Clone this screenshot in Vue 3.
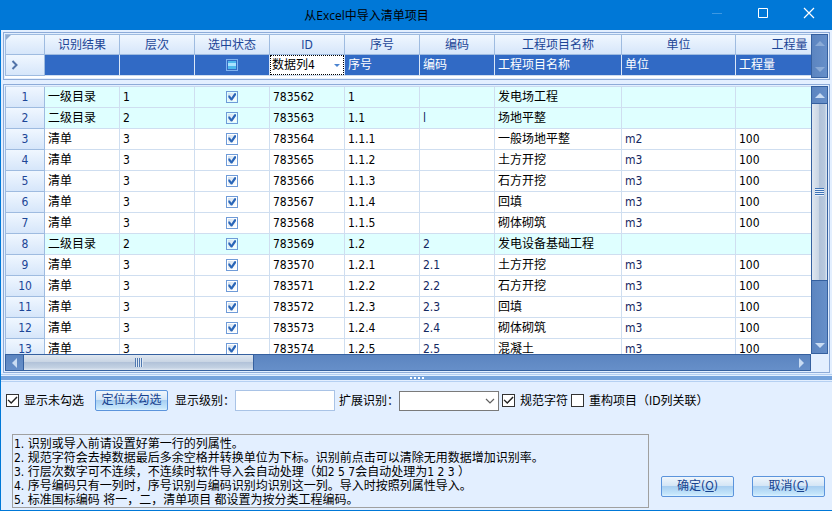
<script setup>
import { ref, reactive } from 'vue'

const headers = ['识别结果', '层次', '选中状态', 'ID', '序号', '编码', '工程项目名称', '单位', '工程量']

const raw = [
  ['一级目录', '1', '783562', '1', '', '发电场工程', '', ''],
  ['二级目录', '2', '783563', '1.1', 'l', '场地平整', '', ''],
  ['清单', '3', '783564', '1.1.1', '', '一般场地平整', 'm2', '100'],
  ['清单', '3', '783565', '1.1.2', '', '土方开挖', 'm3', '100'],
  ['清单', '3', '783566', '1.1.3', '', '石方开挖', 'm3', '100'],
  ['清单', '3', '783567', '1.1.4', '', '回填', 'm3', '100'],
  ['清单', '3', '783568', '1.1.5', '', '砌体砌筑', 'm3', '100'],
  ['二级目录', '2', '783569', '1.2', '2', '发电设备基础工程', '', ''],
  ['清单', '3', '783570', '1.2.1', '2.1', '土方开挖', 'm3', '100'],
  ['清单', '3', '783571', '1.2.2', '2.2', '石方开挖', 'm3', '100'],
  ['清单', '3', '783572', '1.2.3', '2.3', '回填', 'm3', '100'],
  ['清单', '3', '783573', '1.2.4', '2.4', '砌体砌筑', 'm3', '100'],
  ['清单', '3', '783574', '1.2.5', '2.5', '混凝土', 'm3', '100']
]
const rows = reactive(
  raw.map(([kind, level, id, seq, code, name, unit, qty]) => ({
    kind, level, id, seq, code, name, unit, qty, checked: true
  }))
)

const idColumn = ref('数据列4')
const showUnchecked = ref(true)
const levels = ref('')
const extended = ref('')
const normalize = ref(true)
const rebuild = ref(false)

const notes = [
  '1. 识别或导入前请设置好第一行的列属性。',
  '2. 规范字符会去掉数据最后多余空格并转换单位为下标。识别前点击可以清除无用数据增加识别率。',
  '3. 行层次数字可不连续，不连续时软件导入会自动处理（如2 5 7会自动处理为1 2 3 ）',
  '4. 序号编码只有一列时，序号识别与编码识别均识别这一列。导入时按照列属性导入。',
  '5. 标准国标编码 将一，二，清单项目 都设置为按分类工程编码。'
]
</script>

<template>
  <div class="window">
    <header class="titlebar">
      <h1 class="title">从Excel中导入清单项目</h1>
      <button class="win-btn" type="button" aria-label="最小化" disabled>
        <svg width="12" height="12" viewBox="0 0 12 12"><path d="M1 6.5H11" stroke="#3d98e2" fill="none" /></svg>
      </button>
      <button class="win-btn" type="button" aria-label="最大化">
        <svg width="12" height="12" viewBox="0 0 12 12"><path d="M1.5 1.5H10.5V10.5H1.5Z" stroke="#fff" fill="none" /></svg>
      </button>
      <button class="win-btn" type="button" aria-label="关闭">
        <svg width="12" height="12" viewBox="0 0 12 12"><path d="M1 1L11 11M11 1L1 11" stroke="#fff" stroke-width="1.2" fill="none" /></svg>
      </button>
    </header>

    <main class="content">
      <section class="panel head-panel">
        <div class="viewport">
          <table class="grid">
            <colgroup>
              <col class="c-ind" /><col v-for="n in 6" :key="n" class="c-std" />
              <col class="c-name" /><col class="c-unit" /><col class="c-qty" />
            </colgroup>
            <thead>
              <tr>
                <th class="ind corner"></th>
                <th v-for="h in headers" :key="h" class="head">{{ h }}</th>
              </tr>
            </thead>
            <tbody>
              <tr class="mapping">
                <th class="ind arrow-cell">
                  <svg width="8" height="10" viewBox="0 0 8 10"><path d="M1.5 1L5.5 5L1.5 9" stroke="#5273a8" stroke-width="2" fill="none" /></svg>
                </th>
                <td></td>
                <td></td>
                <td class="center"><input class="tick partial" type="checkbox" aria-label="全选" /></td>
                <td class="editing">
                  <select v-model="idColumn" class="cell-select" aria-label="ID 列属性">
                    <option>数据列4</option>
                  </select>
                </td>
                <td>序号</td>
                <td>编码</td>
                <td>工程项目名称</td>
                <td>单位</td>
                <td>工程量</td>
              </tr>
            </tbody>
          </table>
        </div>
        <div class="vbar off">
          <button class="bar-btn" type="button" aria-label="向上" disabled><i class="tri up"></i></button>
          <button class="bar-btn" type="button" aria-label="向下" disabled><i class="tri down"></i></button>
        </div>
      </section>

      <section class="panel body-panel">
        <div class="viewport">
          <table class="grid rows">
            <colgroup>
              <col class="c-ind" /><col v-for="n in 6" :key="n" class="c-std" />
              <col class="c-name" /><col class="c-unit" /><col class="c-qty" />
            </colgroup>
            <tbody>
              <tr v-for="(r, i) in rows" :key="r.id" :class="{ group: r.level !== '3' }">
                <th class="ind">{{ i + 1 }}</th>
                <td>{{ r.kind }}</td>
                <td>{{ r.level }}</td>
                <td class="center"><input v-model="r.checked" class="tick" type="checkbox" :aria-label="'选中 ' + r.id" /></td>
                <td>{{ r.id }}</td>
                <td>{{ r.seq }}</td>
                <td class="code">{{ r.code }}</td>
                <td>{{ r.name }}</td>
                <td class="code">{{ r.unit }}</td>
                <td>{{ r.qty }}</td>
              </tr>
            </tbody>
          </table>
        </div>
        <div class="vbar">
          <button class="bar-btn" type="button" aria-label="向上"><i class="tri up"></i></button>
          <div class="track">
            <div class="thumb"><i class="grip"></i></div>
          </div>
          <button class="bar-btn" type="button" aria-label="向下"><i class="tri down"></i></button>
        </div>
        <div class="hbar">
          <button class="bar-btn" type="button" aria-label="向左"><i class="tri left"></i></button>
          <div class="track">
            <div class="thumb"><i class="grip"></i></div>
          </div>
          <button class="bar-btn" type="button" aria-label="向右"><i class="tri right"></i></button>
        </div>
      </section>
    </main>

    <div class="splitter"><i></i><i></i><i></i><i></i></div>

    <footer class="options">
      <div class="controls">
        <label class="check"><input v-model="showUnchecked" class="box" type="checkbox" />显示未勾选</label>
        <button class="btn locate" type="button">定位未勾选</button>
        <label for="levels">显示级别：</label>
        <input id="levels" v-model="levels" class="text" type="text" />
        <label class="ext" for="extended">扩展识别：</label>
        <span class="combo">
          <select id="extended" v-model="extended"><option value=""></option></select>
          <svg width="10" height="6" viewBox="0 0 10 6"><path d="M1 1L5 5L9 1" stroke="#606060" stroke-width="1.2" fill="none" /></svg>
        </span>
        <label class="check near"><input v-model="normalize" class="box" type="checkbox" />规范字符</label>
        <label class="check near"><input v-model="rebuild" class="box" type="checkbox" />重构项目（ID列关联）</label>
      </div>
      <div class="bottom">
        <div class="notes">
          <p v-for="n in notes" :key="n">{{ n }}</p>
        </div>
        <button class="btn" type="button">确定(<u>O</u>)</button>
        <button class="btn" type="button">取消(<u>C</u>)</button>
      </div>
    </footer>
  </div>
</template>

<style>
body {
  margin: 0;
}
</style>

<style scoped>
* {
  box-sizing: border-box;
}
.window {
  display: flex;
  flex-direction: column;
  height: 100vh;
  min-height: 400px;
  overflow: hidden;
  border-left: 1px solid #0078d7;
  border-bottom: 1px solid #0078d7;
  background: #e3efff;
  color: #000;
  font: 12px/20px "DejaVu Sans Condensed", "Noto Sans", "Noto Sans CJK SC", sans-serif;
}
button,
input,
select {
  margin: 0;
  font: inherit;
  color: inherit;
}

/* title bar */
.titlebar {
  display: flex;
  flex: none;
  height: 30px;
  background: #0078d7;
}
.title {
  flex: 1;
  margin: 0;
  padding-left: 38px;
  text-align: center;
  font: 12px/31px "Open Sans", "Noto Sans CJK SC", sans-serif;
}
.win-btn {
  display: flex;
  align-items: center;
  justify-content: center;
  width: 46px;
  height: 25px;
  padding: 0;
  border: 0;
  background: none;
}

/* grids */
.content {
  display: flex;
  flex: 1;
  flex-direction: column;
  gap: 4px;
  min-height: 0;
  padding: 2px 2px 1px;
}
.panel {
  display: grid;
  grid-template-columns: minmax(0, 1fr) 17px;
  padding: 1px;
  border: 1px solid #8dabd8;
}
.head-panel {
  flex: none;
}
.head-panel .viewport {
  height: 44px;
  background: #fff;
}
.body-panel {
  flex: 1;
  grid-template-rows: minmax(0, 1fr) 17px;
  min-height: 0;
}
.viewport {
  overflow: hidden;
}
.grid {
  width: 839px;
  min-width: 100%;
  table-layout: fixed;
  border-spacing: 0;
  border-collapse: separate;
  border-left: 1px solid #9ebbe0;
}
.rows {
  border-top: 1px solid #c9d9ee;
}
.c-ind {
  width: 39px;
}
.c-std {
  width: 75px;
}
.c-name {
  width: 127px;
}
.c-unit {
  width: 114px;
}
th,
td {
  height: 21px;
  padding: 0;
  overflow: hidden;
  font-weight: 400;
  line-height: 20px;
  white-space: nowrap;
}
td {
  padding-left: 3px;
  border-right: 1px solid #cfdef0;
  border-bottom: 1px solid #cfdef0;
  background: #fff;
}
.head,
.ind {
  border-right: 1px solid #9ebbe0;
  border-bottom: 1px solid #9ebbe0;
  background: linear-gradient(#f0f7ff, #d6e6fa);
  color: #1c4596;
  text-align: center;
}
.head,
.corner {
  padding-top: 2px;
  border-top: 1px solid #9ebbe0;
  line-height: 17px;
}
.corner {
  background: linear-gradient(135deg, #8fabd0 3px, transparent 4px), linear-gradient(#f0f7ff, #d6e6fa);
}
.arrow-cell {
  padding-left: 5px;
  text-align: left;
}
.arrow-cell svg {
  display: block;
}
.group td {
  background: #dfffff;
}
.mapping td {
  border-right-color: #dbe7f7;
  background: #316ac5;
  color: #fff;
}
.center,
.mapping .editing {
  padding: 0;
  text-align: center;
}
.code {
  color: #14285f;
}
.editing {
  position: relative;
}
.cell-select {
  display: block;
  width: 100%;
  height: 20px;
  padding: 0 1px;
  border: 1px dotted #000;
  border-radius: 0;
  outline: 0;
  appearance: none;
  background: #fff;
  color: #000;
  line-height: 18px;
}
.editing::after {
  content: "";
  position: absolute;
  top: 9px;
  right: 4px;
  border: 3px solid transparent;
  border-top-color: #4a83d0;
  border-bottom: 0;
  pointer-events: none;
}
.tick {
  display: block;
  width: 12px;
  height: 12px;
  margin: 0 auto;
  padding: 1px;
  border: 1px solid #6f9bd8;
  appearance: none;
  background: linear-gradient(135deg, #d3e0ee, #fff) content-box #fff;
}
.tick:checked::before {
  content: "";
  display: block;
  width: 8px;
  height: 8px;
  background: #2a66b8;
  clip-path: polygon(4% 30%, 24% 30%, 42% 58%, 80% 4%, 100% 4%, 100% 26%, 52% 94%, 36% 94%, 4% 54%);
}
.partial {
  border-color: #7fb2ee;
  background: linear-gradient(#4db8ec 0 2px, #a8e2ff 2px 5px, #4db8ec 5px) content-box #fff;
}

/* scroll bars */
.vbar {
  display: flex;
  flex-direction: column;
  justify-content: space-between;
  min-height: 0;
  border: 1px solid #35609f;
  background: linear-gradient(90deg, #5c85c0, #668fc9);
}
.hbar {
  display: flex;
  border: 1px solid #35609f;
  background: linear-gradient(#5c85c0, #668fc9);
}
.bar-btn {
  display: flex;
  flex: none;
  align-items: center;
  justify-content: center;
  width: 15px;
  height: 16px;
  padding: 0;
  border: 0;
  background: none;
}
.hbar .bar-btn {
  width: 17px;
  height: 15px;
}
.tri {
  border: 5px solid transparent;
}
.up {
  border-top: 0;
  border-bottom-color: #c9dcf3;
}
.down {
  border-bottom: 0;
  border-top-color: #c9dcf3;
}
.left {
  border-left: 0;
  border-right-color: #c9dcf3;
}
.right {
  border-right: 0;
  border-left-color: #c9dcf3;
}
.off .tri {
  opacity: 0.4;
}
.track {
  display: flex;
  flex: 1;
  min-height: 0;
}
.thumb {
  display: flex;
  align-items: center;
  justify-content: center;
}
.vbar .thumb {
  width: 100%;
  height: 76%;
  border: solid #35609f;
  border-width: 1px 0;
  background: linear-gradient(90deg, #dfe7f0, #c9d5e4 45%, #b0c1d8 46%, #b8c9de 85%, #e0e9f3);
}
.hbar .thumb {
  width: 30%;
  border: solid #35609f;
  border-width: 0 1px;
  background: linear-gradient(#dfe7f0, #c9d5e4 45%, #b0c1d8 46%, #c4d2e3 85%, #e0e9f3);
}
.vbar .grip {
  width: 9px;
  height: 8px;
  background: repeating-linear-gradient(#3f73b5 0 1px, #e8f0fa 1px 2px);
}
.hbar .grip {
  width: 8px;
  height: 9px;
  background: repeating-linear-gradient(90deg, #4f78b0 0 1px, #e0e9f3 1px 2px);
}

/* splitter */
.splitter {
  display: flex;
  flex: none;
  gap: 2px;
  align-items: center;
  justify-content: center;
  height: 8px;
  border: solid #b5d0f2;
  border-width: 1px 0;
  background: linear-gradient(#e3efff 0 1px, #75a3dc 1px 5px, #e3efff 5px);
}
.splitter i {
  width: 2px;
  height: 2px;
  background: #fff;
}

/* options */
.options {
  flex: none;
  padding: 8px 7px 2px 5px;
}
.controls {
  display: flex;
  align-items: center;
  height: 21px;
}
.check {
  display: flex;
  gap: 5px;
  align-items: center;
  white-space: nowrap;
}
.near {
  margin-left: 3px;
}
.box {
  width: 13px;
  height: 13px;
  border: 1px solid #333;
  appearance: none;
  background: #fff;
}
.box:checked::before {
  content: "";
  display: block;
  width: 11px;
  height: 11px;
  background: #222;
  clip-path: polygon(5% 48%, 14% 40%, 38% 64%, 86% 14%, 96% 23%, 38% 82%);
}
.btn {
  flex: none;
  width: 73px;
  height: 21px;
  padding: 0;
  border: 1px solid #5b94dc;
  border-radius: 2px;
  background: linear-gradient(#f0f6fc, #d5e6f6 45%, #a9cff1 50%, #c5e6fb 90%, #dff3ff);
  color: #17428f;
  line-height: 19px;
}
.locate {
  margin: 0 7px 0 11px;
}
.text {
  width: 100px;
  height: 21px;
  padding: 0 3px;
  border: 1px solid #a9c3e6;
  background: #fff;
}
.ext {
  margin-left: 4px;
}
.combo {
  position: relative;
}
.combo select {
  display: block;
  width: 100px;
  height: 20px;
  padding: 0 4px;
  border: 1px solid #7a7a7a;
  border-radius: 0;
  appearance: none;
  background: #fff;
}
.combo svg {
  position: absolute;
  top: 7px;
  right: 4px;
  pointer-events: none;
}
.bottom {
  display: flex;
  gap: 18px;
  align-items: flex-end;
  padding: 23px 0 0 6px;
}
.notes {
  flex: 1;
  margin-right: -6px;
  padding: 2px 1px 0;
  border: 1px solid #a0a0a0;
}
.notes p {
  margin: 0;
  line-height: 14px;
  white-space: nowrap;
}
.bottom .btn {
  margin-bottom: 11px;
}
</style>
